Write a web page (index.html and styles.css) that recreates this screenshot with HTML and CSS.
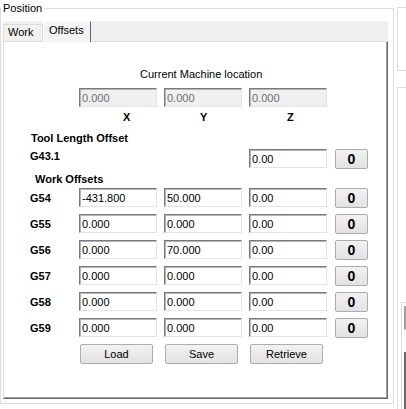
FILE: index.html
```html
<!DOCTYPE html>
<html>
<head>
<meta charset="utf-8">
<title>Position</title>
<link rel="stylesheet" href="styles.css">
</head>
<body>
<div class="screen">
  <fieldset class="group">
    <legend>Position</legend>
    <div class="tabs">
      <div class="tabstrip">
        <div class="tab">Work</div>
        <div class="tab active">Offsets</div>
      </div>
      <div class="page">
        <div class="caption">Current Machine location</div>
        <div class="row ro-row">
          <span class="lbl"></span>
          <input class="tb ro" value="0.000" readonly>
          <input class="tb ro" value="0.000" readonly>
          <input class="tb ro" value="0.000" readonly>
        </div>
        <div class="axes">
          <span class="ax ax-x">X</span>
          <span class="ax ax-y">Y</span>
          <span class="ax ax-z">Z</span>
        </div>
        <div class="heading tlo">Tool Length Offset</div>
        <div class="row g43">
          <span class="lbl">G43.1</span>
          <span class="gap-cell"></span>
          <span class="gap-cell"></span>
          <input class="tb" value="0.00">
          <button class="zero">0</button>
        </div>
        <div class="heading wo">Work Offsets</div>
        <div class="row first">
          <span class="lbl">G54</span>
          <input class="tb" value="-431.800">
          <input class="tb" value="50.000">
          <input class="tb" value="0.00">
          <button class="zero">0</button>
        </div>
        <div class="row">
          <span class="lbl">G55</span>
          <input class="tb" value="0.000">
          <input class="tb" value="0.000">
          <input class="tb" value="0.00">
          <button class="zero">0</button>
        </div>
        <div class="row">
          <span class="lbl">G56</span>
          <input class="tb" value="0.000">
          <input class="tb" value="70.000">
          <input class="tb" value="0.00">
          <button class="zero">0</button>
        </div>
        <div class="row">
          <span class="lbl">G57</span>
          <input class="tb" value="0.000">
          <input class="tb" value="0.000">
          <input class="tb" value="0.00">
          <button class="zero">0</button>
        </div>
        <div class="row">
          <span class="lbl">G58</span>
          <input class="tb" value="0.000">
          <input class="tb" value="0.000">
          <input class="tb" value="0.00">
          <button class="zero">0</button>
        </div>
        <div class="row">
          <span class="lbl">G59</span>
          <input class="tb" value="0.000">
          <input class="tb" value="0.000">
          <input class="tb" value="0.00">
          <button class="zero">0</button>
        </div>
        <div class="actions">
          <button class="btn">Load</button>
          <button class="btn">Save</button>
          <button class="btn">Retrieve</button>
        </div>
      </div>
    </div>
  </fieldset>
  <div class="side">
    <div class="sbox sbox1"></div>
    <div class="sbox sbox2">
      <div class="sbox3">
        <div class="sdark sdark1"></div>
        <div class="sdark sdark2"></div>
      </div>
    </div>
  </div>
</div>
</body>
</html>
```

FILE: styles.css
```css
* { box-sizing: border-box; }
html, body { margin: 0; padding: 0; }
body {
  width: 406px;
  height: 409px;
  overflow: hidden;
  background: #fff;
  font-family: "Liberation Sans", Arial, sans-serif;
  font-size: 11px;
  color: #000;
}
.screen { display: flex; align-items: flex-start; }

.group {
  margin: 1px 3px 0 0;
  padding: 6px 0 5px 2px;
  width: 394px;
  height: 403px;
  min-width: 0;
  border: 1px solid #dcdcdc;
}
.group legend {
  padding: 0 2px;
  margin-left: -2px;
  line-height: 14px;
  font-size: 11px;
}

.tabs { width: 385px; }
.tabstrip {
  display: flex;
  align-items: flex-end;
  height: 20px;
  background: #f0f0f0;
  position: relative;
  z-index: 1;
}
.tab {
  width: 40px;
  height: 17px;
  padding: 1px 0 0 4px;
  line-height: 13px;
  border: 1px solid #dcdcdc;
  border-bottom: none;
  background: #f0f0f0;
}
.tab.active {
  width: 48px;
  height: 21px;
  margin-bottom: -1px;
  padding: 2px 0 0 5px;
  border-left-color: #fff;
  border-top-color: #fff;
  border-right-color: #696969;
  background: #f3f3f3;
}

.page {
  height: 358px;
  background: #fff;
  border: 1px solid #dcdcdc;
  border-right-color: #696969;
  border-bottom-color: #696969;
  box-shadow: inset -1px -1px 0 #a0a0a0;
}

.caption {
  margin-top: 26px;
  padding-left: 136px;
  line-height: 13px;
}

.row {
  display: flex;
  align-items: flex-start;
  gap: 7px;
  height: 20px;
  margin-top: 6px;
  padding-left: 26px;
}
.ro-row { margin-top: 7px; }
.row.g43 { margin-top: 4px; }
.row.first { margin-top: 2px; }

.lbl {
  width: 42px;
  flex: none;
  font-weight: bold;
  line-height: 13px;
  margin-top: 4px;
}
.g43 .lbl { margin-top: 1px; }
.gap-cell { width: 78px; flex: none; }

.tb {
  -webkit-appearance: none;
  appearance: none;
  width: 78px;
  height: 19px;
  flex: none;
  margin: 0;
  padding: 0 0 0 2px;
  font: inherit;
  font-size: 11px;
  color: #000;
  background: #fff;
  border: 1px solid;
  border-color: #7a7a7a #e3e3e3 #e3e3e3 #7a7a7a;
  box-shadow: inset 1px 1px 0 #b4b4b4;
  outline: none;
}
.tb.ro {
  background: #f0f0f0;
  color: #6d6d6d;
}

.zero {
  width: 33px;
  height: 20px;
  flex: none;
  margin: 0 0 0 1px;
  padding: 0;
  font-family: "Liberation Sans", Arial, sans-serif;
  font-weight: bold;
  font-size: 14px;
  line-height: 18px;
  color: #000;
  background: linear-gradient(#f2f2f2, #e2e2e2);
  border: 1px solid #acacac;
  border-radius: 2px;
}

.axes {
  display: flex;
  margin-top: 3px;
  height: 13px;
  line-height: 13px;
  font-weight: bold;
  padding-left: 75px;
}
.ax { flex: none; width: 85px; }
.ax-x { padding-left: 44px; }
.ax-y { padding-left: 36px; }
.ax-z { padding-left: 38px; }

.heading {
  font-weight: bold;
  line-height: 13px;
}
.tlo { margin-top: 8px; padding-left: 27px; }
.wo { margin-top: 4px; padding-left: 31px; }

.actions {
  display: flex;
  gap: 12px;
  margin-top: 6px;
  padding-left: 76px;
}
.btn {
  width: 73px;
  height: 20px;
  margin: 0;
  padding: 0;
  font-family: "Liberation Sans", Arial, sans-serif;
  font-size: 11px;
  color: #000;
  background: linear-gradient(#f2f2f2, #e2e2e2);
  border: 1px solid #acacac;
  border-radius: 2px;
}

.side {
  width: 9px;
  display: flex;
  flex-direction: column;
}
.sbox {
  border: 1px solid #dcdcdc;
  border-right: none;
}
.sbox1 { margin-top: 7px; height: 64px; }
.sbox2 {
  margin-top: 16px;
  height: 330px;
  border-bottom: none;
  padding: 214px 0 0 3px;
}
.sbox3 {
  height: 120px;
  border-top: 1px solid #dcdcdc;
  border-left: 1px solid #dcdcdc;
  padding: 3px 0 0 2px;
}
.sdark {
  border: 1px solid #e3e3e3;
  border-left: 2px solid #696969;
  border-top: 1px solid #696969;
  border-right: none;
}
.sdark1 { height: 24px; border-top: none; border-left-color: #a0a0a0; }
.sdark2 { height: 60px; margin-top: 22px; }
```
